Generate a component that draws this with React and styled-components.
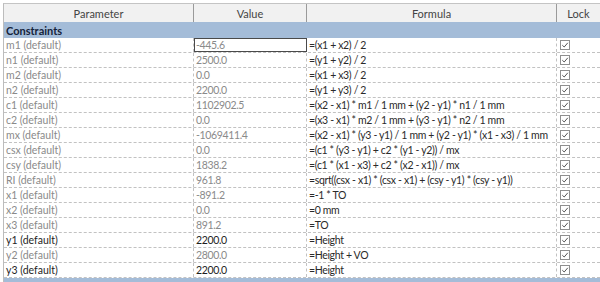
import React from 'react';
import styled, { createGlobalStyle } from 'styled-components';

const Global = createGlobalStyle`
  body {
    margin: 0;
    background: #fff;
    font-family: Lato, 'Noto Sans', sans-serif;
    overflow: hidden;
  }
`;

const COLS = '190px 113px 250px 43px';

const Page = styled.div`
  width: 600px;
  height: 282px;
  overflow: hidden;
  padding: 3px 0 0 3px;
  box-sizing: border-box;
`;

const Table = styled.div`
  border-left: 1px solid #bcbcbc;
  border-top: 1px solid #c4c4c4;
`;

const HeaderRow = styled.div`
  display: grid;
  grid-template-columns: ${COLS};
  height: 18px;
  background: #f1f1f1;
`;

const HeaderCell = styled.div`
  display: flex;
  align-items: center;
  justify-content: center;
  font-size: 11px;
  color: #444;
  border-right: ${(p) => (p.last ? 'none' : '1px solid #9a9a9a')};
`;

const GroupRow = styled.div`
  height: 16px;
  background: #a4bcd8;
  display: flex;
  align-items: center;
  padding-left: 2px;
  font-size: 11px;
  font-weight: 700;
  color: #14233b;
`;

const Row = styled.div`
  display: grid;
  grid-template-columns: ${COLS};
  height: 15px;
  box-sizing: border-box;
  border-bottom: 1px dashed #c2c2c2;
`;

const Cell = styled.div`
  display: flex;
  align-items: center;
  padding-left: 2px;
  font-size: 10.5px;
  letter-spacing: ${(p) => (p.tight ? '-0.35px' : '0')};
  white-space: nowrap;
  overflow: hidden;
  color: ${(p) => (p.strong ? '#1e1e1e' : '#8a8a8a')};
  border-right: 1px dashed #c2c2c2;
  box-sizing: border-box;
  ${(p) => p.focused && 'outline: 1px solid #4a4a4a; outline-offset: -1px;'}
`;

const FormulaCell = styled(Cell)`
  color: #2a2a2a;
`;

const LockCell = styled.div`
  display: flex;
  align-items: center;
  padding-left: 3px;
`;

const Box = styled.svg`
  width: 10px;
  height: 10px;
  display: block;
`;

const Check = () => (
  <Box viewBox="0 0 10 10">
    <rect x="0.5" y="0.5" width="9" height="9" fill="#fff" stroke="#8f8f8f" />
    <path d="M2.3 5.2 L4.2 7 L7.8 2.8" fill="none" stroke="#555" strokeWidth="1" />
  </Box>
);

const rows = [
  ['m1 (default)', '-445.6', '=(x1 + x2) / 2'],
  ['n1 (default)', '2500.0', '=(y1 + y2) / 2'],
  ['m2 (default)', '0.0', '=(x1 + x3) / 2'],
  ['n2 (default)', '2200.0', '=(y1 + y3) / 2'],
  ['c1 (default)', '1102902.5', '=(x2 - x1) * m1 / 1 mm + (y2 - y1) * n1 / 1 mm'],
  ['c2 (default)', '0.0', '=(x3 - x1) * m2 / 1 mm + (y3 - y1) * n2 / 1 mm'],
  ['mx (default)', '-1069411.4', '=(x2 - x1) * (y3 - y1) / 1 mm + (y2 - y1) * (x1 - x3) / 1 mm'],
  ['csx (default)', '0.0', '=(c1 * (y3 - y1) + c2 * (y1 - y2)) / mx'],
  ['csy (default)', '1838.2', '=(c1 * (x1 - x3) + c2 * (x2 - x1)) / mx'],
  ['RI (default)', '961.8', '=sqrt((csx - x1) * (csx - x1) + (csy - y1) * (csy - y1))'],
  ['x1 (default)', '-891.2', '=-1 * TO'],
  ['x2 (default)', '0.0', '=0 mm'],
  ['x3 (default)', '891.2', '=TO'],
  ['y1 (default)', '2200.0', '=Height', true],
  ['y2 (default)', '2800.0', '=Height + VO'],
  ['y3 (default)', '2200.0', '=Height', true],
];

export default function App() {
  return (
    <Page>
      <Global />
      <Table>
        <HeaderRow>
          <HeaderCell>Parameter</HeaderCell>
          <HeaderCell>Value</HeaderCell>
          <HeaderCell>Formula</HeaderCell>
          <HeaderCell last>Lock</HeaderCell>
        </HeaderRow>
        <GroupRow>Constraints</GroupRow>
        {rows.map(([name, value, formula, strong], i) => (
          <Row key={name}>
            <Cell strong={strong}>{name}</Cell>
            <Cell strong={strong} tight focused={i === 0}>{value}</Cell>
            <FormulaCell tight>{formula}</FormulaCell>
            <LockCell>
              <Check />
            </LockCell>
          </Row>
        ))}
        <GroupRow>Dimensions</GroupRow>
      </Table>
    </Page>
  );
}
